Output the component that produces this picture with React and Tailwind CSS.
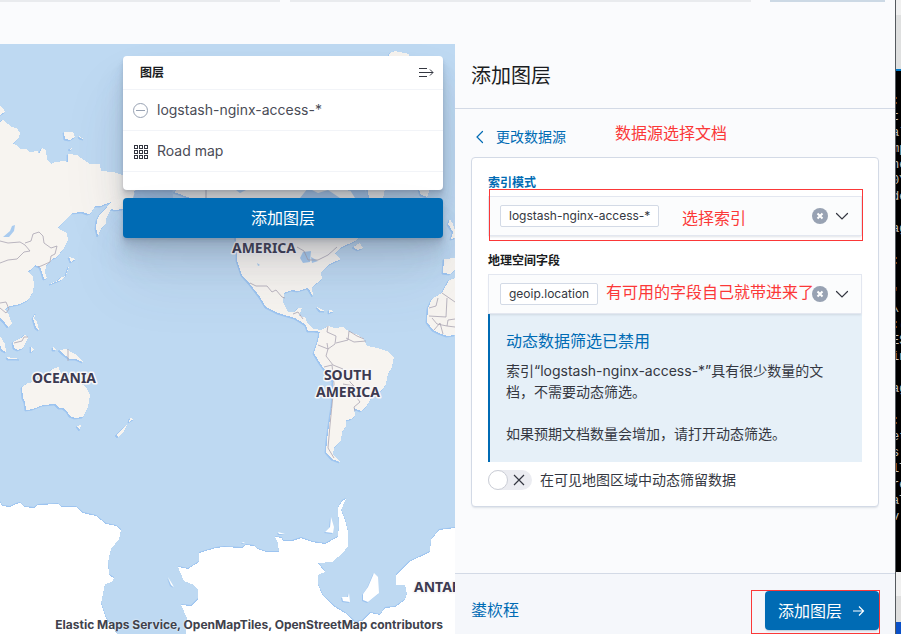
import React from "react";

const LAND = [
  "M0 106 L3 108 L5 112 L0 115Z",
  "M0 122 L3 119 L5 122 L8 124 L11 127 L17 128 L20 133 L19 137 L13 144 L17 145 L20 149 L26 149 L30 152 L38 151 L39 154 L42 148 L46 150 L47 159 L51 164 L55 162 L64 161 L68 162 L68 154 L77 155 L84 160 L90 164 L100 164 L101 171 L113 172 L123 175 L150 176 L150 188 L134 191 L136 198 L123 209 L115 210 L111 209 L108 215 L106 219 L106 223 L101 229 L98 236 L96 228 L97 220 L100 214 L103 211 L107 207 L111 202 L108 203 L101 206 L95 206 L91 213 L88 214 L82 212 L72 213 L66 219 L58 228 L63 231 L67 233 L68 240 L64 248 L57 257 L52 259 L46 266 L45 272 L47 278 L44 279 L42 272 L40 267 L35 265 L31 270 L27 271 L33 276 L34 285 L33 292 L28 300 L20 304 L10 306 L5 309 L9 315 L10 322 L5 321 L0 318Z",
  "M0 312 L4 311 L9 316 L12 323 L8 327 L5 323 L0 318Z",
  "M50 284 L57 281 L61 277 L66 276 L69 266 L66 275 L61 280 L53 283Z",
  "M69 257 L76 259 L71 262Z M64 132 L73 132 L75 137 L70 140 L65 139Z M79 136 L84 139 L80 138Z M69 149 L72 148 L71 150Z",
  "M13 342 L21 338 L25 334 L28 338 L23 348 L18 350 L14 348Z M0 336 L5 344 L6 352 L2 350 L0 345Z M7 357 L20 359 L8 359Z M36 313 L34 318 L37 322 L39 330 L36 328 L33 318Z M31 346 L34 350 L31 352Z",
  "M59 350 L66 349 L75 354 L83 362 L76 359 L70 359 L62 353Z M53 347 L56 350 L53 350Z",
  "M22 387 L28 383 L38 381 L48 374 L52 369 L59 367 L60 373 L67 377 L71 371 L73 374 L80 383 L86 387 L90 395 L88 407 L83 417 L75 418 L70 416 L67 411 L63 408 L59 408 L55 404 L43 405 L33 409 L26 410 L25 402 L23 398Z",
  "M77 426 L81 425 L80 430Z M130 418 L134 419 L129 422Z M127 425 L124 431 L118 437 L116 435 L122 429Z",
  "M237 244 L237 260 L242 275 L250 284 L260 297 L266 307 L278 313 L288 316 L295 318 L300 321 L306 325 L308 331 L315 331 L320 332 L322 330 L314 329 L308 324 L305 317 L299 316 L302 308 L298 308 L295 312 L288 312 L283 302 L284 293 L292 290 L298 291 L308 288 L313 296 L312 287 L322 279 L321 272 L330 264 L341 259 L335 254 L340 248 L355 241 L365 232 L360 198 L352 192 L320 180 L190 180 L174 192 L190 198 L232 225Z",
  "M366 180 L387 180 L383 198 L369 198Z M419 189 L430 189 L427 197 L421 195Z M389 56 L390 53 L395 51 L409 54 L410 58 L389 58Z M353 247 L360 243 L363 248 L358 250Z",
  "M317 307 L325 311 L320 311Z M329 310 L334 311 L329 313Z",
  "M320 331 L328 326 L334 328 L343 327 L350 332 L358 335 L363 338 L367 346 L377 348 L387 351 L394 357 L392 367 L388 374 L386 384 L382 390 L373 395 L366 407 L361 411 L354 408 L355 416 L351 419 L346 420 L346 426 L342 432 L341 440 L334 448 L333 455 L340 462 L332 459 L326 452 L327 440 L329 425 L332 405 L333 381 L325 370 L320 363 L314 353 L318 341Z",
  "M455 258 L444 259 L443 273 L450 274 L455 270Z M455 278 L449 280 L442 293 L432 299 L428 308 L427 322 L433 330 L439 333 L447 336 L455 335Z",
  "M450 219 L453 224 L455 230 L455 238 L451 239 L453 232 L448 224Z",
];
const ICE =
  "M0 502 L2 506 L10 507 L16 504 L20 503 L24 507 L34 508 L38 505 L58 504 L61 507 L76 507 L83 513 L96 516 L106 524 L116 526 L121 530 L119 539 L111 549 L108 562 L109 575 L114 578 L112 582 L105 584 L101 603 L106 618 L117 634 L0 634Z M186 634 L187 618 L181 605 L191 606 L198 599 L198 590 L194 585 L184 581 L178 567 L188 569 L199 562 L199 553 L216 548 L224 547 L242 548 L246 545 L254 546 L257 549 L266 552 L279 552 L278 543 L275 537 L282 538 L283 541 L292 541 L298 539 L301 538 L312 542 L325 544 L338 537 L339 526 L338 508 L342 501 L346 499 L341 510 L345 520 L348 532 L348 546 L343 553 L332 562 L318 563 L325 572 L318 575 L318 585 L323 596 L335 607 L345 613 L355 622 L362 621 L370 613 L380 615 L385 608 L395 607 L405 600 L407 594 L405 585 L396 585 L396 575 L409 562 L430 552 L431 540 L439 530 L455 528 L455 634Z";
const ISLANDS =
  "M374 573 L378 577 L379 593 L368 602 L363 600 L363 594 L368 587Z M342 597 L348 597 L349 593 L350 602 L343 601Z M331 517 L334 527 L333 533 L325 532 L330 527Z M278 532 L285 534 L279 534Z M168 577 L174 587 L171 585Z M243 542 L245 543 L242 543Z";
const BORDERS =
  "M0 241 L8 243 L20 242 L25 245 L30 251 L24 252 L17 259 L8 260 L0 263 M25 243 L31 241 L33 234 L39 232 L43 236 L44 243 L51 248 L57 246 L55 254 L51 256 L50 262 L41 266 L38 267 M0 303 L6 302 L9 309 L6 313 L0 308 M68 349 L68 361 M14 343 L22 341 L24 337 L28 337 M250 283 L256 286 L267 286 L272 292 L276 290 L282 297 L285 298 M293 314 L298 312 L303 319 M297 247 L304 251 L308 260 L318 260 L328 255 L337 247 M328 326 L327 332 L336 336 L335 344 L328 349 L327 343 M336 343 L348 340 L349 331 L357 336 L364 339 M318 345 L328 349 L326 356 L333 365 L343 369 L350 382 L354 386 L354 394 L360 402 L354 407 L355 411 M346 338 L354 342 L366 341 M324 367 L332 365 L334 384 L333 395 L330 425 L328 448 L334 458 M343 384 L354 386 M442 293 L455 302 M447 298 L446 317 L429 316 M429 308 L436 306 L438 298 M447 326 L448 320 L455 319 M432 318 L437 324 L447 326 L455 327 M434 330 L440 323 L443 334";

const TERMINAL = [
  ":", "t", "al", "mp", "ne", "0Y", "de", " ", "ag", " ", ":", " ", "'", "\\", ":(", "ES", "in",
  " ", "ag", " ", ":", "et", "s", "lT", "re", "aT", "v",
];

function WorldMap() {
  return (
    <svg
      className="absolute inset-0 h-full w-full"
      viewBox="0 44 455 590"
      preserveAspectRatio="xMidYMid slice"
      role="img"
      aria-label="Road map"
    >
      <g fill="#9dc4f0" transform="translate(-1 1)">
        {LAND.map((d) => (
          <path key={d} d={d} stroke="#9dc4f0" strokeWidth="0.8" />
        ))}
        <path d={ISLANDS} />
      </g>
      <path d={ICE} fill="#9dc4f0" transform="translate(0 -1)" />
      <g fill="#f7f4f0" shapeRendering="crispEdges">
        {LAND.map((d) => (
          <path key={d} d={d} />
        ))}
      </g>
      <g fill="#a9cbef">
        <path d="M3 237 L10 231 L12 226 L15 225 L14 231 L9 237Z" />
        <path d="M303 252 L311 251 L310 262 L303 263 L300 258 Z M311 257 L318 261 L312 263Z M257 263 L260 265 L258 266Z" />
        <path d="M172 180 L173 198 L133 198 L136 188Z M236 190 L246 190 L240 193Z M300 198 L308 188 L318 193 L328 190 L340 198Z M350 190 L365 190 L368 198 L355 198Z" />
      </g>
      <g fill="#ffffff">
        <path d={ICE} shapeRendering="crispEdges" />
        <path d={ISLANDS} />
      </g>
      <path d={BORDERS} fill="none" stroke="#aaa5b3" strokeWidth="0.8" />
      <path d="M206 190 V198" stroke="#a9a7b5" />
      <g
        fill="#3c3a50"
        stroke="#f8f7f8"
        strokeWidth="3"
        strokeLinejoin="round"
        paintOrder="stroke"
        textAnchor="middle"
        className="font-['Noto_Sans',sans-serif] text-[14px] font-bold"
      >
        <text x="264" y="253">AMERICA</text>
        <text x="348" y="380">SOUTH</text>
        <text x="348" y="397">AMERICA</text>
        <text x="64" y="383">OCEANIA</text>
        <text x="414" y="592" textAnchor="start">ANTARCTICA</text>
      </g>
    </svg>
  );
}

function LayerPanel() {
  return (
    <div className="absolute top-3 right-3 flex w-80 flex-col gap-2">
      <section className="rounded bg-white pb-[18px] shadow-[0_40px_64px_rgba(65,78,101,.1),0_24px_32px_rgba(65,78,101,.1),0_16px_16px_rgba(65,78,101,.1),0_8px_8px_rgba(65,78,101,.1),0_4px_4px_rgba(65,78,101,.1),0_2px_2px_rgba(65,78,101,.1)]">
        <header className="flex h-[34px] items-center justify-between border-b border-[#f2f4f8] pr-[9px] pl-[17px]">
          <h2 className="text-xs font-bold text-[#1a1c21]">图层</h2>
          <button type="button" aria-label="折叠图层面板" className="text-[#343741]">
            <svg width="16" height="16" viewBox="0 0 16 16" fill="none" stroke="currentColor">
              <path d="M1 3.5H9M1 7.5H15M1 11.5H9M12 4.500L15 7.500L12 10.500" />
            </svg>
          </button>
        </header>
        <ul className="text-sm text-[#4a4c56]">
          <li className="flex h-[41px] items-center gap-2 border-b border-[#f2f4f8] px-[10px]">
            <svg width="16" height="16" viewBox="0 0 16 16" fill="none" stroke="#98a2b3">
              <circle cx="7.5" cy="8.5" r="7" />
              <path d="M3 8.5H12" />
            </svg>
            logstash-nginx-access-*
          </li>
          <li className="flex h-[41px] items-center gap-2 border-b border-[#f2f4f8] px-[10px]">
            <svg width="16" height="16" viewBox="0 0 16 16" fill="none" stroke="#343741">
              {[2.5, 7.5, 12.5].map((y) =>
                [1.5, 6.5, 11.5].map((x) => (
                  <rect key={`${x}-${y}`} x={x} y={y} width="3" height="3" />
                ))
              )}
            </svg>
            Road map
          </li>
        </ul>
      </section>
      <button
        type="button"
        className="h-10 rounded bg-[#006bb4] text-base text-white shadow-[0_40px_64px_rgba(65,78,101,.1),0_24px_32px_rgba(65,78,101,.1),0_16px_16px_rgba(65,78,101,.1),0_8px_8px_rgba(65,78,101,.1),0_4px_4px_rgba(65,78,101,.1),0_2px_2px_rgba(65,78,101,.1)]"
      >
        添加图层
      </button>
    </div>
  );
}

function ComboBox({ id, value }) {
  return (
    <div className="flex h-10 items-center border border-[#e3e7f0] bg-[#fbfcfd] pr-[11px] pl-[11px] shadow-[0_2px_2px_-1px_rgba(152,162,179,.3)]">
      <span className="flex h-[22px] items-center rounded-xs border border-[#d3dae6] bg-white px-2 text-xs whitespace-nowrap text-[#343741]">
        {value}
      </span>
      <input id={id} role="combobox" aria-expanded="false" className="h-full min-w-0 flex-1 bg-transparent outline-none" />
      <button type="button" aria-label="清除输入" className="relative z-10 mr-[6px]">
        <svg width="16" height="16" viewBox="0 0 16 16">
          <circle cx="8" cy="8" r="8" fill="#98a2b3" />
          <path d="M5.500 5.500L10.500 10.500M10.500 5.500L5.500 10.500" stroke="#fff" strokeWidth="2" />
        </svg>
      </button>
      <button type="button" aria-label="打开选项列表">
        <svg width="16" height="16" viewBox="0 0 16 16" fill="none" stroke="#343741" strokeWidth="1.2">
          <path d="M2.500 5.500L8 11L13.500 5.500" strokeLinecap="round" />
        </svg>
      </button>
    </div>
  );
}

function SourcePanel() {
  return (
    <aside className="flex w-[440px] shrink-0 flex-col bg-[#fafbfd]">
      <header className="flex h-[65px] items-center border-b border-[#d3dae6] px-4">
        <h2 className="text-xl text-[#1a1c21]">添加图层</h2>
      </header>
      <div className="flex-1 p-4">
        <div className="relative">
          <button type="button" className="flex h-6 items-center gap-2 text-sm text-[#006bb4]">
            <svg width="17" height="16" viewBox="0 0 17 16" fill="none" stroke="currentColor" strokeWidth="1.2">
              <path d="M11.500 2.500L6 8L11.500 13.500" strokeLinecap="round" />
            </svg>
            更改数据源
          </button>
          <span className="absolute -top-1 left-36 text-base text-[#fb3838]">数据源选择文档</span>
        </div>
        <form className="mt-2 rounded border border-[#d3dae6] bg-white p-4 shadow-[0_2px_2px_-1px_rgba(152,162,179,.3)]">
          <div className="relative">
            <label htmlFor="index-pattern" className="mb-1 block text-xs leading-[18px] font-bold text-[#006bb4]">
              索引模式
            </label>
            <ComboBox id="index-pattern" value="logstash-nginx-access-*" />
            <div className="pointer-events-none absolute -right-px -bottom-[5px] left-px h-[52px] border border-[#fb3838]" />
            <span className="pointer-events-none absolute top-8 left-[194px] text-base text-[#fb3838]">选择索引</span>
          </div>
          <div className="relative mt-4">
            <label htmlFor="geo-field" className="mb-1 block text-xs leading-[18px] font-bold text-[#1a1c21]">
              地理空间字段
            </label>
            <ComboBox id="geo-field" value="geoip.location" />
            <span className="pointer-events-none absolute top-7 left-[118px] text-base whitespace-nowrap text-[#fb3838]">
              有可用的字段自己就带进来了
            </span>
          </div>
          <div className="border-l-2 border-[#006bb4] bg-[#e6f0f8] p-4 text-sm leading-[21px] text-[#343741]">
            <h3 className="mb-2 text-base leading-[22px] text-[#006bb4]">动态数据筛选已禁用</h3>
            <p>索引“logstash-nginx-access-*”具有很少数量的文档，不需要动态筛选。</p>
            <p className="mt-[21px] mb-[2px]">如果预期文档数量会增加，请打开动态筛选。</p>
          </div>
          <label className="mt-2 flex h-5 items-center gap-2 text-sm text-[#343741]">
            <input type="checkbox" role="switch" className="peer sr-only" />
            <span className="flex h-5 w-11 items-center gap-1 rounded-full bg-[#ebecf1]">
              <span className="h-5 w-5 rounded-full border border-[#cbced6] bg-white" />
              <svg width="14" height="14" viewBox="0 0 14 14" stroke="#343741" strokeWidth="1.2">
                <path d="M2 2L12 12M12 2L2 12" />
              </svg>
            </span>
            在可见地图区域中动态筛留数据
          </label>
        </form>
      </div>
      <footer className="flex items-center justify-between border-t border-[#d3dae6] bg-[#f5f7fb] pt-4 pr-[15px] pl-4">
        <button type="button" className="pb-1 text-base text-[#006bb4]">鍙栨秷</button>
        <div className="h-11 border border-[#fb3838] pl-[13px]">
          <button
            type="button"
            className="flex h-[39px] items-center gap-2 rounded bg-[#006bb4] px-[13px] text-base text-white shadow-[0_2px_2px_-1px_rgba(54,97,126,.3)]"
          >
            添加图层
            <svg width="16" height="16" viewBox="0 0 16 16" fill="none" stroke="currentColor" strokeWidth="1.2">
              <path d="M3 8H13M9 3.500L13.500 8L9 12.500" />
            </svg>
          </button>
        </div>
      </footer>
    </aside>
  );
}

function BackgroundWindow() {
  return (
    <div aria-hidden="true" className="flex w-[6px] shrink-0 flex-col overflow-hidden border-l border-[#555a5f]">
      <div className="h-[15px] bg-[#f0f0f0]" />
      <div className="h-[54px] bg-[#dfe0e0]" />
      <div className="h-[2px] bg-[#0078c8]" />
      <div className="flex-1 overflow-hidden bg-black pt-[22px]">
        <pre className="-ml-1 font-['Liberation_Mono',monospace] text-xs leading-4 text-[#c9c4bd]">
          {TERMINAL.join("\n")}
        </pre>
      </div>
      <div className="h-6 bg-[#f0f0f0]" />
      <div className="h-[26px] bg-[#dfdfdf]" />
      <div className="h-3 bg-[#0a50c8]" />
    </div>
  );
}

export default function App() {
  return (
    <div className="flex min-h-screen bg-[#fafbfd] font-['Inter','Noto_Sans_CJK_SC',sans-serif]">
      <div className="flex min-w-0 flex-1 flex-col">
        <div className="flex h-11 items-start pr-[10px]">
          <div className="h-[2px] w-[280px] bg-[#e9ebee]" />
          <div className="ml-[10px] h-[2px] flex-1 bg-[#e9ebee]" />
          <div className="ml-[19px] h-[2px] w-[115px] bg-[#ccd9e5]" />
        </div>
        <div className="flex flex-1">
          <main className="relative min-w-0 flex-1 overflow-hidden bg-[#bed9f2]">
            <WorldMap />
            <LayerPanel />
            <p className="absolute right-3 bottom-0 text-xs leading-[18px] font-bold whitespace-nowrap text-[#40424c] [text-shadow:0_0_2px_#fff]">
              Elastic Maps Service, OpenMapTiles, OpenStreetMap contributors
            </p>
          </main>
          <SourcePanel />
        </div>
      </div>
      <BackgroundWindow />
    </div>
  );
}
